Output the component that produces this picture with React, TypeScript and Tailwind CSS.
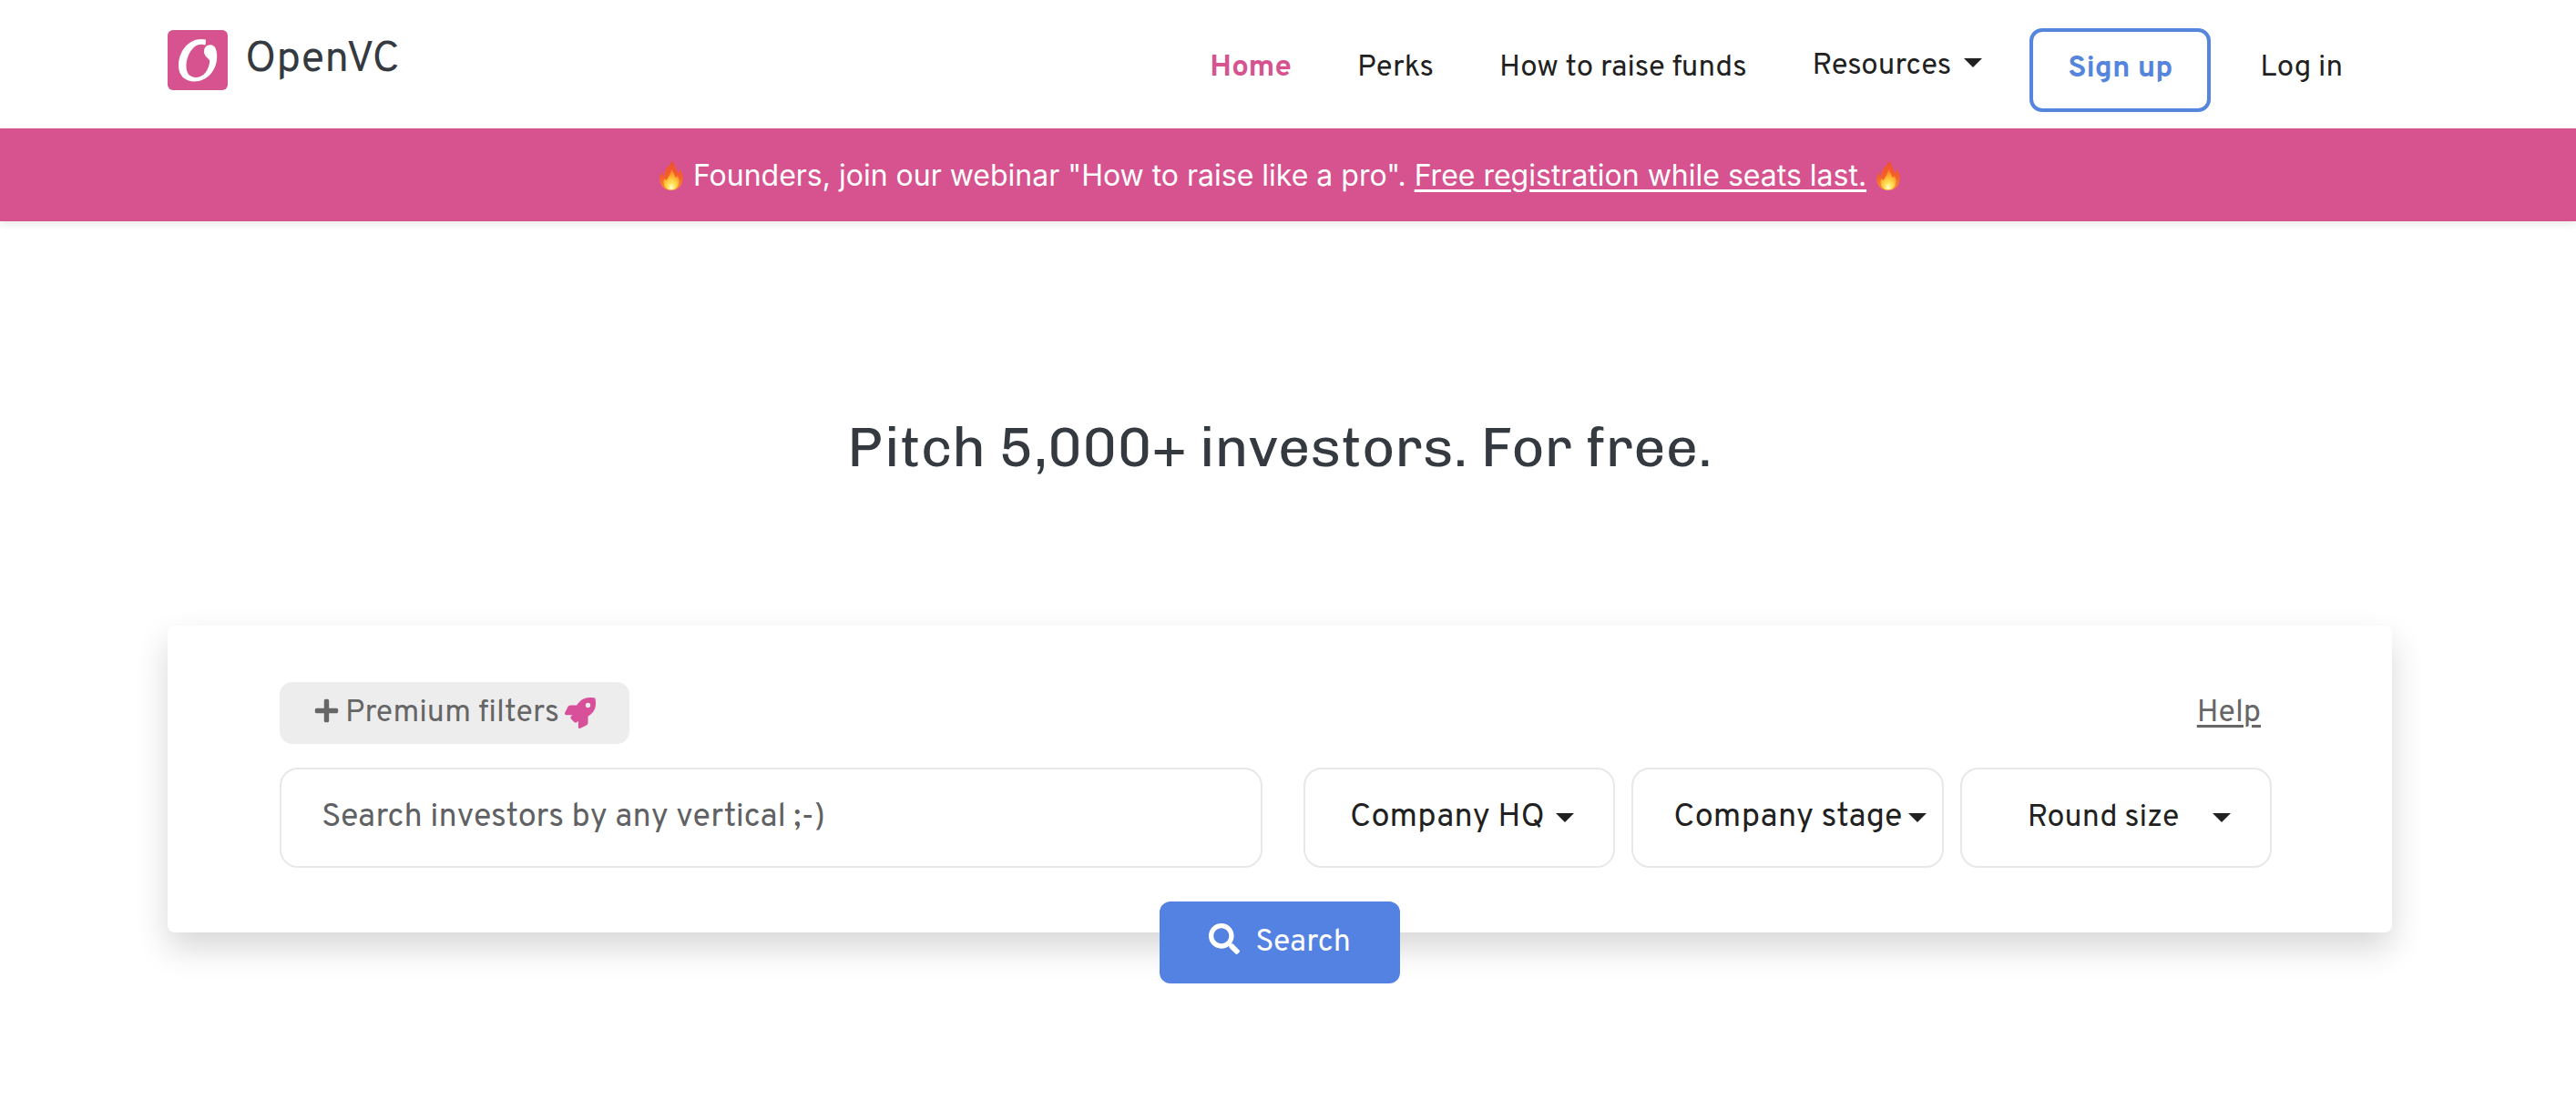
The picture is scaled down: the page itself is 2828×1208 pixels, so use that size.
import { FaPlus, FaRocket, FaSearch } from "react-icons/fa";

function Logo() {
  return (
    <svg viewBox="0 0 66 66" className="size-[66px]" aria-hidden="true">
      <rect width="66" height="66" rx="6" fill="#d65390" />
      <path
        d="M42 10.500C26 7 12 21 12 39C12 50 19 56.500 29.500 56.500C43.500 56.500 54.200 44 54.200 29C54.200 21.500 52 16.200 47 16.200C43 16.200 40 19 40 23.500C40 28.500 43.500 29.500 46.300 33.500C45.500 44 39.500 52 31 52C24 52 20.500 47 20.500 40C20.500 28 28.500 12 41.500 16.500Z"
        fill="#fff"
      />
    </svg>
  );
}

function Flame({ id }: { id: string }) {
  return (
    <svg viewBox="0 0 26 33" className="mb-[2px] h-[33px] w-[26px] shrink-0" aria-hidden="true">
      <defs>
        <linearGradient id={`${id}-outer`} x1="0" y1="0" x2="0" y2="1">
          <stop offset="0" stopColor="#ee4f2e" />
          <stop offset="0.55" stopColor="#f5602a" />
          <stop offset="1" stopColor="#fb8f35" />
        </linearGradient>
        <radialGradient id={`${id}-inner`} cx="0.5" cy="0.88" r="0.75">
          <stop offset="0" stopColor="#fffbd0" />
          <stop offset="0.3" stopColor="#ffe45c" />
          <stop offset="0.7" stopColor="#ffb62e" />
          <stop offset="1" stopColor="#fb8a2a" />
        </radialGradient>
      </defs>
      <path
        d="M13.500 0C16 3 17 6 18 8.500C19 11 20 13.500 20.700 14C22 12.500 22.400 11 22.200 9.500C25 13 26 17.500 25.500 21.500C24.800 28.500 19.500 33 13 33C6 33 0.800 28.500 0.300 21.500C0 18 1.200 15 2.800 12.800C3 15 3.400 16.500 4.500 17.500C6.200 15.500 5.500 11.500 8 8.500C10 6 13.500 4.500 13.500 0Z"
        fill={`url(#${id}-outer)`}
      />
      <path
        d="M13 10C15 13 17 15.500 17.500 19C18.500 19 19.300 18 19.700 17C22 20.500 22 24 20.500 27.500C19 30.800 16.500 32.500 13 32.500C9 32.500 6 30.500 5 27C4.100 24 4.500 22 5.800 20C6.200 21.300 7 22 8 22C9.500 18.500 12.800 15 13 10Z"
        fill={`url(#${id}-inner)`}
      />
    </svg>
  );
}

function Caret({ className = "" }: { className?: string }) {
  return (
    <svg viewBox="0 0 20 10" className={`h-[10px] w-[20px] ${className}`} aria-hidden="true">
      <path d="M0 0H20L10 10Z" fill="#212121" />
    </svg>
  );
}

const filters = [
  { label: "Company HQ", text: "pl-[49px]", caret: "right-[45px]" },
  { label: "Company stage", text: "pl-[44px]", caret: "right-[19px]" },
  { label: "Round size", text: "pl-[72px] text-[34px]", caret: "right-[45px]" },
];

export default function App() {
  return (
    <div className="bg-white font-[Overpass,Roboto,sans-serif] text-[#212121]">
      <header className="pr-[18px]">
        <div className="mx-auto flex w-full max-w-[2442px] items-start justify-between pt-[31px] pb-[18px]">
          <a href="#" className="flex items-center gap-[19px] text-[47px] leading-[70px] text-[#343a40]">
            <Logo />
            OpenVC
          </a>
          <nav className="flex h-[92px] items-center pr-[54px] text-[33px]" aria-label="Main">
            <div className="flex items-center gap-[72px] pr-[52px] pb-[2px]">
              <a href="#" className="font-bold text-[#d65390]">Home</a>
              <a href="#">Perks</a>
              <a href="#">How to raise funds</a>
              <button type="button" aria-haspopup="true" className="flex items-center gap-[14px] pb-[4px]">
                Resources
                <Caret className="mb-[10px]" />
              </button>
            </div>
            <a
              href="#"
              className="mr-[54px] flex h-full items-center rounded-[14px] border-4 border-[#5585dc] px-[38px] font-bold text-[#5585dc]"
            >
              Sign up
            </a>
            <a href="#" className="pb-[2px]">Log in</a>
          </nav>
        </div>
      </header>

      <div className="bg-[#d65390] pr-[18px] shadow-[0_4px_8px_rgba(0,0,0,0.08)]">
        <p className="flex h-[102px] items-center justify-center gap-[11px] pt-[2px] font-[Inter,sans-serif] text-[32px] text-white">
          <Flame id="flame-left" />
          <span>
            Founders, join our webinar "How to raise like a pro".{" "}
            <a href="#" className="underline decoration-[3px] underline-offset-4">Free registration while seats last.</a>
          </span>
          <Flame id="flame-right" />
        </p>
      </div>

      <main className="pr-[18px]">
        <h1 className="pt-[208px] pb-[156px] text-center font-[Chivo,Inter,sans-serif] text-[62px] leading-[80px] text-[#343a40]">
          Pitch 5,000+ investors. For free.
        </h1>

        <form className="mx-auto w-full max-w-[2442px]" onSubmit={(e) => e.preventDefault()}>
          <div className="rounded-lg bg-white pt-[62px] pr-[132px] pb-[71px] pl-[123px] shadow-[0_17px_36px_rgba(0,0,0,0.16)]">
            <div className="flex items-center justify-between pr-[12px] text-[34px] text-[#666]">
              <button type="button" className="flex h-[68px] items-center rounded-[14px] bg-[#ededed] px-[37px]">
                <FaPlus className="mr-[6px] mb-[6px] text-[29px]" />
                Premium filters
                <FaRocket className="ml-[6px] text-[34px] text-[#d9509a]" />
              </button>
              <a href="#" className="underline decoration-[3px] underline-offset-4">Help</a>
            </div>

            <div className="mt-[26px] grid grid-cols-[1079fr_1063fr] gap-[45px] text-[36px]">
              <input
                type="text"
                aria-label="Search investors"
                placeholder="Search investors by any vertical ;-)"
                className="h-[110px] w-full min-w-0 rounded-[20px] border-2 border-[#e8e8e8] px-[44px] placeholder:text-[#5f6164]"
              />
              <div className="grid grid-cols-3 gap-[18px]">
                {filters.map((f) => (
                  <div key={f.label} className="relative flex items-center">
                    <select
                      aria-label={f.label}
                      className={`h-[110px] w-full appearance-none rounded-[20px] border-2 border-[#e8e8e8] bg-white ${f.text}`}
                    >
                      <option>{f.label}</option>
                    </select>
                    <Caret className={`pointer-events-none absolute ${f.caret}`} />
                  </div>
                ))}
              </div>
            </div>
          </div>

          <button
            type="submit"
            className="relative mx-auto -mt-[34px] flex h-[90px] items-center gap-[17px] rounded-[12px] bg-[#5482e3] px-[54px] text-[34px] text-white"
          >
            <FaSearch className="mb-[8px]" />
            Search
          </button>
        </form>
      </main>
    </div>
  );
}
